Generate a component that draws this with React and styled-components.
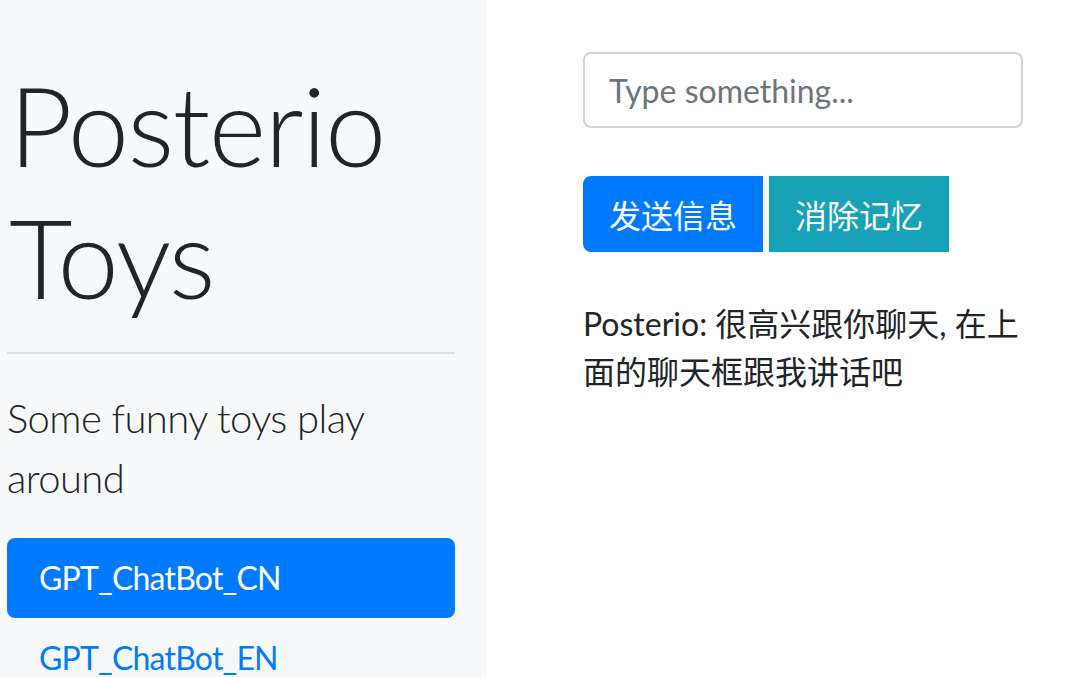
import React from "react";
import styled, { createGlobalStyle } from "styled-components";

const GlobalStyle = createGlobalStyle`
  html, body {
    margin: 0;
    padding: 0;
    background: #fff;
  }
  body {
    font-family: Lato, "Noto Sans CJK SC", sans-serif;
    color: #212529;
  }
`;

const Page = styled.div`
  display: flex;
  min-height: 100vh;
  overflow: hidden;
`;

const Sidebar = styled.div`
  width: 487px;
  flex-shrink: 0;
  background: #f8f9fa;
  padding: 58px 32px 0 7px;
  box-sizing: border-box;
`;

const Title = styled.h1`
  margin: 0 0 30px 2px;
  font-size: 110px;
  font-weight: 300;
  line-height: 132px;
  letter-spacing: -1.5px;
`;

const Divider = styled.hr`
  margin: 0;
  border: 0;
  border-top: 2px solid #dfe0e1;
`;

const Lead = styled.p`
  margin: 34px 0 30px 0;
  font-size: 40px;
  font-weight: 300;
  line-height: 60px;
  letter-spacing: -0.6px;
`;

const Nav = styled.nav`
  display: flex;
  flex-direction: column;
`;

const NavLink = styled.a`
  display: block;
  padding: 16px 32px;
  font-size: 32px;
  line-height: 48px;
  letter-spacing: -0.8px;
  border-radius: 8px;
  text-decoration: none;
  color: ${(p) => (p.$active ? "#fff" : "#007bff")};
  background: ${(p) => (p.$active ? "#007bff" : "transparent")};
`;

const Main = styled.div`
  padding: 52px 0 0 96px;
  width: 440px;
`;

const Input = styled.input`
  display: block;
  width: 100%;
  height: 76px;
  box-sizing: border-box;
  padding: 12px 24px;
  font-family: Lato, "Noto Sans CJK SC", sans-serif;
  font-size: 32px;
  color: #495057;
  border: 2px solid #ced4da;
  border-radius: 8px;
  outline: none;

  &::placeholder {
    color: #6c757d;
  }
`;

const Buttons = styled.div`
  display: flex;
  gap: 6px;
  margin-top: 48px;
`;

const Button = styled.button`
  padding: 12px 24px;
  font-family: "Noto Sans CJK SC", sans-serif;
  font-size: 32px;
  line-height: 48px;
  height: 76px;
  color: #fff;
  border: 2px solid ${(p) => p.$bg};
  background: ${(p) => p.$bg};
  border-radius: ${(p) => p.$radius};
  cursor: pointer;
`;

const Reply = styled.p`
  margin: 48px 0 0;
  font-size: 32px;
  line-height: 48px;
`;

export default function App() {
  return (
    <>
      <GlobalStyle />
      <Page>
        <Sidebar>
          <Title>Posterio Toys</Title>
          <Divider />
          <Lead>Some funny toys play around</Lead>
          <Nav>
            <NavLink href="#" $active>
              GPT_ChatBot_CN
            </NavLink>
            <NavLink href="#">GPT_ChatBot_EN</NavLink>
          </Nav>
        </Sidebar>
        <Main>
          <Input placeholder="Type something..." />
          <Buttons>
            <Button $bg="#007bff" $radius="8px 0 0 8px">
              发送信息
            </Button>
            <Button $bg="#17a2b8" $radius="0">
              消除记忆
            </Button>
          </Buttons>
          <Reply>Posterio: 很高兴跟你聊天, 在上面的聊天框跟我讲话吧</Reply>
        </Main>
      </Page>
    </>
  );
}
